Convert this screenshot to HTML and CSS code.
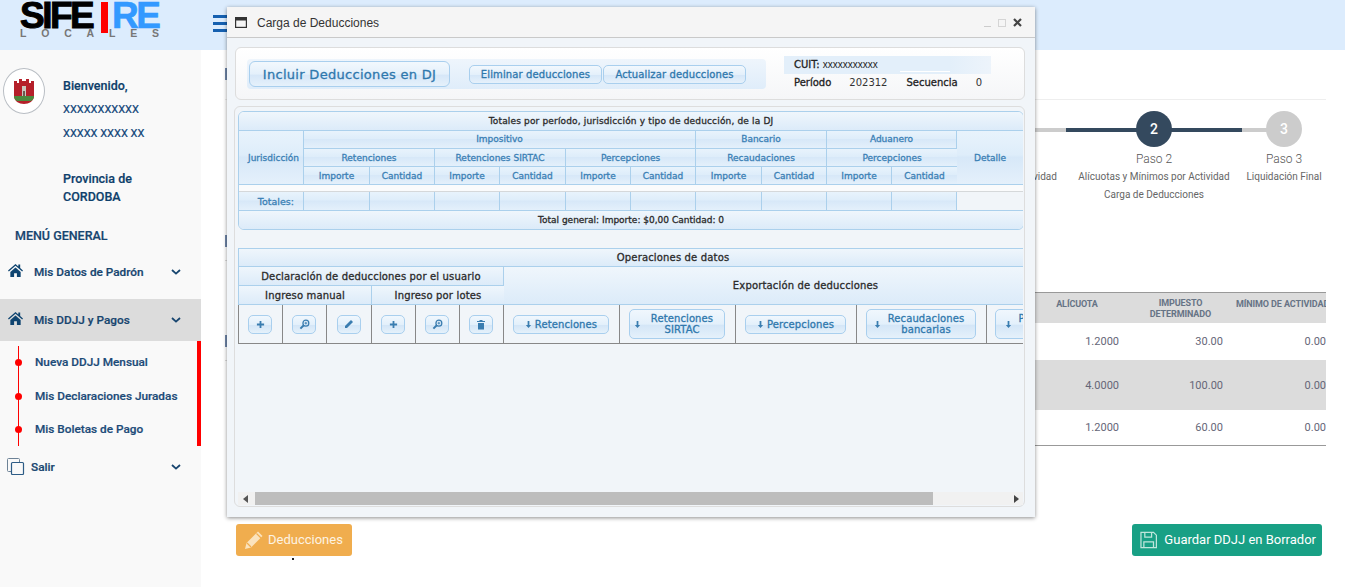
FILE: index.html
```html
<!DOCTYPE html>
<html lang="es">
<head>
<meta charset="utf-8">
<title>Carga de Deducciones</title>
<link rel="stylesheet" href="styles.css">
</head>
<body>
<svg class="defs" width="0" height="0" aria-hidden="true">
  <symbol id="home" viewBox="0 0 18 16"><path d="M9 1 1 8l.9 1L9 3l7.100 6 .9-1-3-2.600V1.500h-2v2.200zM3.500 9.500 9 4.800l5.500 4.700V15H10.500v-4h-3v4H3.500z" fill="currentColor"/></symbol>
  <symbol id="chev" viewBox="0 0 10 6"><path d="M1 1l4 3.600L9 1" fill="none" stroke="currentColor" stroke-width="1.800"/></symbol>
  <symbol id="arrow" viewBox="0 0 8 10"><path d="M3 1h2v4.500h2L4 9 1 5.500h2z" fill="currentColor"/></symbol>
  <symbol id="plus" viewBox="0 0 10 10"><path d="M4 1h2v3h3v2H6v3H4V6H1V4h3z" fill="currentColor"/></symbol>
  <symbol id="zoom" viewBox="0 0 12 12"><circle cx="7.500" cy="4.500" r="3.200" fill="none" stroke="currentColor" stroke-width="1.400"/><path d="M5.500 6.500 1.500 10.500" stroke="currentColor" stroke-width="2.200"/><path d="M6 4.500h3M7.500 3v3" stroke="currentColor"/></symbol>
</svg>
<header class="topbar">
  <div class="logo">
    <div class="logo-main"><span class="logo-sife">SIFE</span><span class="logo-bar"></span><span class="logo-re">RE</span></div>
    <div class="logo-sub">LOCALES</div>
  </div>
  <div class="burger"><i></i><i></i><i></i></div>
</header>
<div class="layout">
  <aside class="sidebar">
    <div class="user">
      <div class="crest">
        <svg width="22" height="27" viewBox="0 0 22 27"><path d="M1 3h3v2h2V1h3v2h4V1h3v4h2V3h3v15c0 5-5 8-10 8S1 23 1 18z" fill="#b5202a"/><path d="M1 18h20c0 2-1 4-3 5H4c-2-1-3-3-3-5z" fill="#4c8a3e"/><path d="M9 8h4v10H9z" fill="#c9c9c0"/><path d="M10 13h2v5h-2z" fill="#6d5b4f"/></svg>
      </div>
      <div class="user-info">
        <div class="strong">Bienvenido,</div>
        <div class="ident">XXXXXXXXXXX</div>
        <div class="ident">XXXXX XXXX XX</div>
        <div class="strong prov">Provincia de CORDOBA</div>
      </div>
    </div>
    <div class="menu-title">MENÚ GENERAL</div>
    <nav>
      <div class="menu-item"><svg class="ico"><use href="#home"/></svg><span>Mis Datos de Padrón</span><svg class="chev"><use href="#chev"/></svg></div>
      <div class="menu-group">
        <div class="menu-item active"><svg class="ico"><use href="#home"/></svg><span>Mis DDJJ y Pagos</span><svg class="chev"><use href="#chev"/></svg></div>
        <ul class="submenu">
          <li>Nueva DDJJ Mensual</li>
          <li>Mis Declaraciones Juradas</li>
          <li>Mis Boletas de Pago</li>
        </ul>
      </div>
      <div class="menu-item exit">
        <svg class="ico-copy" width="18" height="17" viewBox="0 0 18 17"><path d="M4.500 13.500H1.500a1 1 0 0 1-1-1V1.500a1 1 0 0 1 1-1h10a1 1 0 0 1 1 1v2.500" fill="none" stroke="#6d8296"/><rect x="4.500" y="4.500" width="12" height="12" rx="1" fill="none" stroke="#2d5c86" stroke-width="1.200"/></svg>
        <span>Salir</span><svg class="chev"><use href="#chev"/></svg>
      </div>
    </nav>
  </aside>
  <main class="main">
    <div class="sec-head first"><i></i></div>
    <div class="stepper">
      <div class="step done"><div class="circle">1</div><div class="step-title">Paso 1</div><div class="step-sub">Datos de la Actividad</div></div>
      <div class="step current"><div class="circle">2</div><div class="step-title">Paso 2</div><div class="step-sub">Alícuotas y Mínimos por Actividad</div><div class="step-sub">Carga de Deducciones</div></div>
      <div class="step last"><div class="circle">3</div><div class="step-title">Paso 3</div><div class="step-sub">Liquidación Final</div></div>
    </div>
    <div class="sec-head second"><i></i><i class="rule"></i></div>
    <div class="sec-row">
      <div class="gutter"><i></i><i class="rule"></i></div>
      <div class="grid">
        <div class="grow head"></div><div class="c1 head">ALÍCUOTA</div><div class="c2 head">IMPUESTO DETERMINADO</div><div class="c3 head">MÍNIMO DE ACTIVIDAD</div>
        <div class="grow r1"></div><div class="c1 r1">1.2000</div><div class="c2 r1">30.00</div><div class="c3 r1">0.00</div>
        <div class="grow r2"></div><div class="c1 r2">4.0000</div><div class="c2 r2">100.00</div><div class="c3 r2">0.00</div>
        <div class="grow r3"></div><div class="c1 r3">1.2000</div><div class="c2 r3">60.00</div><div class="c3 r3">0.00</div>
      </div>
    </div>
    <div class="actions">
      <button class="btn orange">
        <svg width="18" height="18" viewBox="1 1 18 18"><path d="M14 1.500l4.500 4.500L7 17.500 1 19l1.500-6z" fill="#fbe3bd"/><path d="M12.500 3.500l4.500 4.500M3 13l4 4" stroke="#f0ad4e" stroke-width="1.200"/></svg>
        <span>Deducciones</span>
      </button>
      <button class="btn green">
        <svg width="18" height="18" viewBox="0 0 18 18"><path d="M1 1h13l3 3v13H1z" fill="none" stroke="#bfe6dc" stroke-width="1.300"/><path d="M5 1v5h7V1M4 17v-6h10v6" fill="none" stroke="#bfe6dc" stroke-width="1.300"/></svg>
        <span>Guardar DDJJ en Borrador</span>
      </button>
    </div>
  </main>
</div>

<section class="win">
  <div class="win-title">
    <svg width="12" height="11" viewBox="0 0 12 11"><rect x=".6" y=".6" width="10.800" height="9.800" fill="none" stroke="#333" stroke-width="1.200"/><rect x="1" y="1" width="10" height="2.500" fill="#333"/></svg>
    <span class="win-name">Carga de Deducciones</span>
    <span class="win-ctrl">
      <i class="min"></i><i class="max"></i>
      <svg width="9" height="9" viewBox="0 0 9 9"><path d="M1 1l7 7M8 1 1 8" stroke="#444" stroke-width="2.200"/></svg>
    </span>
  </div>
  <div class="win-body">
    <div class="tool-panel">
      <div class="toolbar">
        <button class="dbtn big">Incluir Deducciones en DJ</button>
        <span class="grip"></span>
        <button class="dbtn">Eliminar deducciones</button>
        <button class="dbtn">Actualizar deducciones</button>
        <span class="grip end"></span>
      </div>
      <div class="info">
        <div class="info-top"><b>CUIT:</b> <span class="cuit">xxxxxxxxxxx</span></div>
        <div class="info-bot"><b>Período</b><span>202312</span><b>Secuencia</b><span>0</span></div>
      </div>
    </div>
    <div class="data-panel">
      <div class="scroller">
        <table class="tot">
          <colgroup><col class="w-j"><col class="w-66"><col class="w-65"><col class="w-65"><col class="w-66"><col class="w-65"><col class="w-65"><col class="w-66"><col class="w-65"><col class="w-65"><col class="w-65"><col class="w-d"></colgroup>
          <tr><th colspan="12" class="dark title">Totales por período, jurisdicción y tipo de deducción, de la DJ</th></tr>
          <tr class="top-row"><th rowspan="3" class="jur">Jurisdicción</th><th colspan="6">Impositivo</th><th colspan="2">Bancario</th><th colspan="2">Aduanero</th><th rowspan="3">Detalle</th></tr>
          <tr><th colspan="2">Retenciones</th><th colspan="2">Retenciones SIRTAC</th><th colspan="2">Percepciones</th><th colspan="2">Recaudaciones</th><th colspan="2">Percepciones</th></tr>
          <tr><th>Importe</th><th>Cantidad</th><th>Importe</th><th>Cantidad</th><th>Importe</th><th>Cantidad</th><th>Importe</th><th>Cantidad</th><th>Importe</th><th>Cantidad</th></tr>
          <tr class="gap"><td colspan="12"></td></tr>
          <tr class="sum"><th class="lbl">Totales:</th><th></th><th></th><th></th><th></th><th></th><th></th><th></th><th></th><th></th><th></th><td class="blank"></td></tr>
          <tr><th colspan="12" class="dark foot">Total general: Importe: $0,00 Cantidad: 0</th></tr>
        </table>
        <table class="ops">
          <colgroup><col class="o44"><col class="o44"><col class="o45"><col class="o44"><col class="o44"><col class="o44"><col class="o116"><col class="o116"><col class="o121"><col class="o130"><col class="o120"></colgroup>
          <tr class="op-title"><th colspan="11" class="dark">Operaciones de datos</th></tr>
          <tr><th colspan="6" class="dark">Declaración de deducciones por el usuario</th><th colspan="5" rowspan="2" class="dark">Exportación de deducciones</th></tr>
          <tr><th colspan="3" class="dark">Ingreso manual</th><th colspan="3" class="dark">Ingreso por lotes</th></tr>
          <tr class="op-row">
            <td><button class="ibtn"><svg width="9" height="9"><use href="#plus"/></svg></button></td>
            <td><button class="ibtn"><svg width="11" height="11"><use href="#zoom"/></svg></button></td>
            <td><button class="ibtn"><svg width="10" height="10" viewBox="0 0 10 10"><path d="M7 1l2 2-6 6H1V7z" fill="currentColor"/></svg></button></td>
            <td><button class="ibtn"><svg width="9" height="9"><use href="#plus"/></svg></button></td>
            <td><button class="ibtn"><svg width="11" height="11"><use href="#zoom"/></svg></button></td>
            <td><button class="ibtn"><svg width="10" height="11" viewBox="0 0 10 11"><path d="M1 2h8v1H1zM3.500 1h3v1h-3zM2 4h6v6.500H2z" fill="currentColor"/></svg></button></td>
            <td><button class="ebtn"><svg width="7" height="9"><use href="#arrow"/></svg><span>Retenciones</span></button></td>
            <td><button class="ebtn tall"><svg width="7" height="9"><use href="#arrow"/></svg><span>Retenciones SIRTAC</span></button></td>
            <td><button class="ebtn"><svg width="7" height="9"><use href="#arrow"/></svg><span>Percepciones</span></button></td>
            <td><button class="ebtn tall"><svg width="7" height="9"><use href="#arrow"/></svg><span>Recaudaciones bancarias</span></button></td>
            <td><button class="ebtn tall"><svg width="7" height="9"><use href="#arrow"/></svg><span>Percepciones aduaneras</span></button></td>
          </tr>
        </table>
      </div>
      <div class="hscroll">
        <i class="arr left"></i>
        <div class="track"><div class="thumb"></div></div>
        <i class="arr right"></i>
      </div>
    </div>
  </div>
</section>
</body>
</html>
```
FILE: styles.css
```css
* { box-sizing: border-box; }
html, body { height: 100%; }
body {
  margin: 0;
  overflow: hidden;
  position: relative;
  background: #fff;
  font-family: Roboto, "Liberation Sans", sans-serif;
  color: #555;
}
.defs { position: absolute; }

/* Top bar */
.topbar {
  height: 50px;
  background: #dcecfd;
  display: flex;
  align-items: flex-start;
  padding-left: 20px;
}
.logo { width: 193px; padding-top: 2px; }
.logo-main {
  display: flex;
  height: 27px;
  align-items: flex-start;
  font: 700 37px/28px "Liberation Sans", sans-serif;
}
.logo-sife { color: #000; letter-spacing: -2.500px; -webkit-text-stroke: 1px #000; width: 81px; }
.logo-bar { width: 7px; height: 31px; background: #f00; flex: none; }
.logo-re { color: #39f; letter-spacing: -2.500px; margin-left: 4px; -webkit-text-stroke: .6px #39f; }
.logo-sub {
  font: 700 10.500px/8px "Liberation Sans", sans-serif;
  color: #777;
  letter-spacing: 14.800px;
  white-space: nowrap;
}
.burger { display: flex; flex-direction: column; gap: 4px; margin-top: 15px; width: 15px; }
.burger i { height: 3px; background: #1560b0; }

/* Sidebar */
.layout { display: flex; height: 537px; }
.sidebar {
  width: 201px;
  flex: none;
  background: #f9f9f9;
  color: #0e3f6b;
  font-size: 12.500px;
  font-weight: 500;
  -webkit-text-stroke: .2px currentColor;
}
.user { display: flex; padding: 18px 0 0 3px; }
.crest {
  width: 42px;
  height: 46px;
  flex: none;
  border: 1px solid #b9bec4;
  border-radius: 50%;
  background: #fff;
  display: flex;
  align-items: center;
  justify-content: center;
}
.user-info { margin: 6px 0 0 18px; width: 92px; }
.user-info > div { line-height: 24px; }
.user-info .ident { font-size: 11px; font-weight: 400; color: #0f4477; white-space: nowrap; }
.user-info .prov { margin-top: 24px; line-height: 18px; }
.menu-title { padding: 22px 0 0 15px; line-height: 16px; color: #17456f; font-size: 12.500px; }
nav { margin-top: 7px; }
.menu-item {
  display: flex;
  align-items: center;
  height: 42px;
  padding-left: 7px;
  font-size: 11.800px;
  color: #17456f;
}
.menu-item span { flex: 1; margin-left: 10px; }
.ico { width: 17px; height: 15px; color: #0f4470; flex: none; margin-top: -4px; }
.chev { width: 10px; height: 6px; color: #17456f; margin-right: 20px; }
nav > .menu-item:first-child { margin-bottom: 6px; }
.menu-group { border-right: 4px solid #f00; height: 147px; }
.menu-item.active { background: #dcdcdc; margin-right: -4px; }
.submenu {
  list-style: none;
  margin: 5px 0 0 18px;
  padding: 0 0 0 16px;
  border-left: 1px solid #f00;
  height: 100px;
  font-size: 11.800px;
  color: #1c4b78;
}
.submenu li { position: relative; height: 33.500px; line-height: 16px; padding-top: 8px; white-space: nowrap; }
.submenu li::before {
  content: "";
  position: absolute;
  left: -20px;
  top: 13px;
  width: 7px;
  height: 7px;
  border-radius: 50%;
  background: #f00;
}
.menu-item.exit span { margin-left: 6px; }
.ico-copy { flex: none; margin-top: -2px; }

/* Main */
.main { flex: 1; min-width: 0; padding: 0 19px 0 24px; display: flex; flex-direction: column; }
.sec-head i, .gutter i { display: block; width: 3px; height: 12px; background: #6f86a8; }
.sec-head .rule, .gutter .rule { height: 1px; margin-top: 13px; background: #ddd; }
.sec-head.first { height: 50px; padding-top: 18px; border-bottom: 1px solid #eee; flex: none; }
.stepper { display: flex; justify-content: flex-end; height: 114px; flex: none; padding-top: 11px; font-size: 12px; text-align: center; }
.step { position: relative; width: 176px; flex: none; color: #666; }
.step::before { content: ""; position: absolute; left: 0; right: 0; top: 17px; height: 4px; background: #ccc; }
.step.current::before { background: #34495e; }
.step.last { width: 84px; }
.step.last::before { right: 50%; }
.circle {
  position: relative;
  width: 36px;
  height: 36px;
  line-height: 36px;
  margin: 0 auto;
  border-radius: 50%;
  background: #ccc;
  color: #fff;
  font-size: 14px;
  font-weight: 500;
}
.step.current .circle { background: #34495e; }
.step-title { margin-top: 4px; line-height: 17px; font-weight: 300; color: #555; }
.step-sub { font-size: 10px; line-height: 17.500px; color: #666; white-space: nowrap; }
.step.done .step-sub { padding-left: 64px; }
.sec-head.second { height: 78px; padding-top: 21px; flex: none; }
.sec-row { display: flex; flex: none; }
.gutter { width: 5px; flex: none; padding-top: 43px; }
.grid {
  flex: 1;
  display: grid;
  grid-template-columns: 1fr 90px 103px 103px;
  grid-template-rows: 31px 37px 50px 35px;
  font-size: 11px;
  color: #667;
  border-bottom: 1px solid #999;
}
.grid > div { display: flex; align-items: center; justify-content: flex-end; min-width: 0; overflow: hidden; }
.grid .head {
  background: #dcdcdc;
  border-top: 1px solid #999;
  font-size: 9px;
  letter-spacing: -.1px;
  font-weight: 700;
  color: #667385;
  text-align: center;
  justify-content: center;
  line-height: 11px;
  white-space: nowrap;
}
.grid .c2.head { white-space: normal; padding: 2px 0 0 18px; }
.grid .c1.head { padding: 0 0 8px 4px; }
.grid .c3.head { padding: 0 0 8px 13px; justify-content: flex-start; }
.grid .r2 { background: #dcdcdc; }
.grid .c1:not(.head) { padding-right: 1px; }
.actions { display: flex; justify-content: space-between; margin: 78px 4px 0 11px; flex: none; }
.btn {
  position: relative;
  display: flex;
  align-items: center;
  height: 32px;
  border: 0;
  border-radius: 3px;
  color: #fff;
  font: 400 13px Roboto, sans-serif;
  gap: 5px;
  white-space: nowrap;
}
.btn span { margin-top: -1px; }
.orange { background: #f0ad4e; width: 116px; padding-left: 9px; color: #fdf3e3; }
.orange::after { content: ""; position: absolute; left: 56px; top: 34px; width: 2px; height: 2px; background: #222; }
.green { background: #18a085; width: 190px; padding-left: 8px; gap: 7px; }

/* Window */
.win {
  position: absolute;
  left: 227px;
  top: 7px;
  width: 808px;
  height: 510px;
  background: #f1f5f9;
  box-shadow: 0 1px 4px rgba(0,0,0,.45);
  display: flex;
  flex-direction: column;
}
.win-title {
  height: 31px;
  flex: none;
  background: #f5f5f5;
  border-bottom: 1px solid #c9c9c9;
  display: flex;
  align-items: center;
  padding: 1px 13px 0 8px;
  font: 12px "Liberation Sans", sans-serif;
  color: #333;
}
.win-name { margin-left: 10px; flex: 1; }
.win-ctrl { display: flex; align-items: center; gap: 7px; }
.win-ctrl .min { width: 7px; height: 1px; background: #ccc; margin-top: 8px; }
.win-ctrl .max { width: 8px; height: 8px; border: 1px solid #d5d5d5; }
.win-body { flex: 1; min-height: 0; padding: 9px 10px 10px 8px; font-family: "DejaVu Sans", sans-serif; }
.tool-panel {
  height: 53px;
  border: 1px solid #ddd;
  border-radius: 6px;
  background: linear-gradient(#fff, #f5f6f8);
  display: flex;
  align-items: flex-start;
  padding: 8px 0 0 11px;
}
.toolbar {
  width: 519px;
  height: 30px;
  margin-top: 3px;
  padding: 2px;
  border-radius: 4px;
  background: linear-gradient(#eef5fc, #dfedfa);
  display: flex;
  align-items: center;
  gap: 1px;
}
.dbtn {
  font: 400 10px "DejaVu Sans", sans-serif;
  letter-spacing: .12px;
  -webkit-text-stroke: .3px currentColor;
  color: #2f78ad;
  height: 19px;
  padding: 0;
  border: 1px solid #a9cfee;
  border-radius: 5px;
  background: linear-gradient(#f2f8fd, #e4f0fb 50%, #d6e7f8 55%, #e6f1fb);
  width: 133px;
  flex: none;
  white-space: nowrap;
}
.dbtn + .dbtn { width: 143px; }
.dbtn.big { width: 201px; height: 26px; font-size: 13px; letter-spacing: .3px; border-radius: 6px; }
.grip { width: 17px; height: 10px; flex: none; background: radial-gradient(#b8cfe2 35%, transparent 40%) 7px 0 / 2px 2px repeat-y, radial-gradient(#b8cfe2 35%, transparent 40%) 10px 0 / 2px 2px repeat-y; }
.grip.end { margin-left: 1px; }
.info { margin: 0 0 0 18px; width: 207px; font-size: 10px; color: #333; }
.info-top { position: relative; height: 18px; padding-left: 10px; line-height: 18px; background: linear-gradient(90deg, #e3effa, #e3effa 80%, #edf4fb); color: #222; }
.info-top::after { content: ""; position: absolute; left: 116px; top: 15px; width: 50px; height: 1px; background: #fff; }
.info b { font-weight: 400; -webkit-text-stroke: .3px currentColor; color: #222; }
.cuit { font-family: "Liberation Sans", sans-serif; font-size: 10px; }
.info-bot { height: 18px; line-height: 18px; display: flex; padding-left: 10px; }
.info-bot span { margin: 0 19px 0 18px; }
.info-bot span:last-child { margin-right: 0; }
.data-panel {
  height: 401px;
  margin-top: 6px;
  border: 1px solid #ddd;
  border-radius: 6px;
  margin-left: -1px;
  padding: 4px 1px 1px 3px;
  display: flex;
  flex-direction: column;
}
.scroller { flex: 1; overflow: hidden; min-height: 0; }
table { border-collapse: separate; border-spacing: 0; table-layout: fixed; font-size: 9px; }
.tot { width: 785px; border: 1px solid #abd0ec; border-radius: 6px; overflow: hidden; }
.w-j { width: 65px; } .w-66 { width: 66px; } .w-65 { width: 65px; } .w-d { width: 66px; }
th {
  font-weight: 400;
  -webkit-text-stroke: .3px currentColor;
  color: #3a80b5;
  height: 18px;
  padding: 0;
  white-space: nowrap;
  overflow: hidden;
  border-right: 1px solid #abd0ec;
  border-bottom: 1px solid #abd0ec;
  background: linear-gradient(#e8f3fc, #deedfa 45%, #d7e8f8 50%, #e4f0fb);
}
th:last-child { border-right: 0; }
.jur { padding-left: 9px; text-align: left; }
.dark { color: #2b2b2b; background: linear-gradient(#eff6fc, #dcebf9); }
.tot tr:first-child th { height: 19px; }
.title { letter-spacing: .16px; }
.top-row th { padding-bottom: 2px; }
.top-row .jur, .top-row th[rowspan] { padding-bottom: 0; }
.gap td { height: 7px; padding: 0; background: #fafbfc; border-bottom: 1px solid #d5d8da; }
.sum th { height: 19px; }
.lbl { text-align: right; padding-right: 9px; font-size: 9.500px; }
.blank { background: #f1f5f9; border-bottom: 1px solid #abd0ec; padding: 0; }
.tot .foot { height: 18px; border-bottom: 0; }
.ops { width: 834px; margin-top: 18px; border-top: 1px solid #abd0ec; border-left: 1px solid #abd0ec; font-size: 10px; }
.ops th { letter-spacing: .16px; height: 19px; }
.o44 { width: 44px; } .o45 { width: 45px; } .o116 { width: 116px; } .o121 { width: 121px; } .o130 { width: 130px; } .o120 { width: 120px; }
.ops .op-title th { height: 18px; }
.op-row td {
  height: 39px;
  padding: 0 1px 0 0;
  text-align: center;
  border-right: 1px solid #888;
  border-bottom: 1px solid #888;
  background: #f1f5f9;
}
.op-row td:first-child { box-shadow: -1px 0 0 #888; }
.ibtn {
  width: 24px;
  height: 19px;
  padding: 0;
  border: 1px solid #a9cfee;
  border-radius: 5px;
  color: #3a7db0;
  background: linear-gradient(#f0f7fd, #e3f0fb 50%, #d4e6f7 55%, #e5f1fb);
  display: inline-flex;
  align-items: center;
  justify-content: center;
  vertical-align: middle;
}
.ebtn {
  width: 96px;
  height: 19px;
  padding: 0;
  border: 1px solid #a9cfee;
  border-radius: 5px;
  color: #2f78ad;
  font: 400 10px/11px "DejaVu Sans", sans-serif;
  letter-spacing: .1px;
  -webkit-text-stroke: .3px currentColor;
  background: linear-gradient(#f0f7fd, #e3f0fb 50%, #d4e6f7 55%, #e5f1fb);
  display: inline-flex;
  align-items: center;
  justify-content: center;
  gap: 3px;
  vertical-align: middle;
}
.ebtn.tall { height: 30px; }
.ebtn span { white-space: normal; text-align: center; width: auto; }
.ebtn svg { flex: none; color: #3a7db0; }
.op-row td:nth-child(8) span { width: 76px; }
.op-row td:nth-child(9) .ebtn { width: 101px; }
.op-row td:nth-child(10) .ebtn { width: 110px; }
.op-row td:nth-child(10) span { width: 84px; }
.op-row td:nth-child(11) .ebtn { width: 102px; gap: 5px; }
.op-row td:nth-child(11) span { width: 70px; }
.hscroll { height: 13px; flex: none; display: flex; align-items: center; background: #f1f1f1; }
.track { flex: 1; height: 13px; margin: 0 4px 0 4px; }
.thumb { width: 678px; height: 13px; background: #bdbdbd; }
.arr { width: 0; height: 0; border: 4px solid transparent; flex: none; }
.arr.left { border-right: 5px solid #555; border-left: 0; margin-left: 5px; margin-right: 3px; }
.arr.right { border-left: 5px solid #444; border-right: 0; margin-right: 4px; }
```
